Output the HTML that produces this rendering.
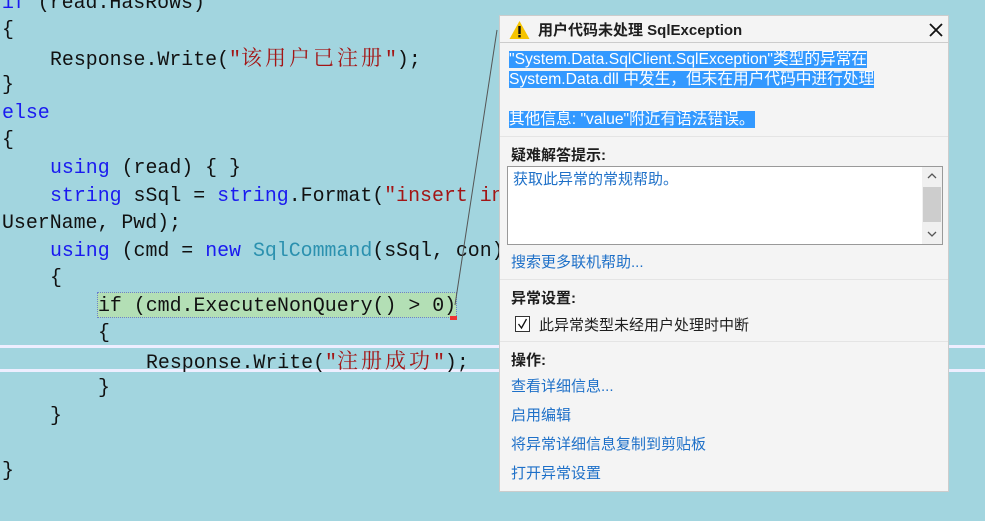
<!DOCTYPE html>
<html><head><meta charset="utf-8"><style>
body{margin:0;width:985px;height:521px;background:#a2d5df;position:relative;overflow:hidden}
.l{position:absolute;left:2px;height:27.5px;white-space:pre;font-family:"Liberation Mono","Noto Serif CJK SC",monospace;font-size:19.9px;line-height:27.5px;color:#111}
.k{color:#1a1af0}.s{color:#a31515}.t{color:#2b91af}
.c{font-family:"Noto Serif CJK SC",serif;font-size:21px;letter-spacing:3px}
.pop{position:absolute;left:499px;top:15px;width:450px;height:477px;background:#f4f4f4;border:1px solid #ccc;box-sizing:border-box;font-family:"Liberation Sans","Noto Sans CJK SC",sans-serif;font-size:15px;color:#1e1e1e}
.a{position:absolute;white-space:nowrap}
.lnk{color:#1e70c8}
.b{font-weight:bold}
.sep{position:absolute;left:0;right:0;height:1px;background:#e4e4e4}
.sel{background:#3399ff;color:#fff}
</style></head><body>
<div class="l" style="top:-11px"><span class="k">if</span> (read.HasRows)</div>
<div class="l" style="top:16px">{</div>
<div class="l" style="top:44px;left:50px">Response.Write(<span class="s">"<span class="c">该用户已注册</span>"</span>);</div>
<div class="l" style="top:71px">}</div>
<div class="l" style="top:99px"><span class="k">else</span></div>
<div class="l" style="top:126px">{</div>
<div class="l" style="top:154px;left:50px"><span class="k">using</span> (read) { }</div>
<div class="l" style="top:182px;left:50px"><span class="k">string</span> sSql = <span class="k">string</span>.Format(<span class="s">"insert in</span></div>
<div class="l" style="top:209px">UserName, Pwd);</div>
<div class="l" style="top:237px;left:50px"><span class="k">using</span> (cmd = <span class="k">new</span> <span class="t">SqlCommand</span>(sSql, con))</div>
<div class="l" style="top:264px;left:50px">{</div>
<div style="position:absolute;left:97px;top:292px;width:360px;height:26px;background:#b3dfb5;border:1px dotted #6a7fd0;box-sizing:border-box"></div>
<div style="position:absolute;left:450px;top:316px;width:7px;height:4px;background:#e33"></div>
<div class="l" style="top:292px;left:98px">if (cmd.ExecuteNonQuery() &gt; 0)</div>
<div class="l" style="top:319px;left:98px">{</div>
<div style="position:absolute;left:0;top:345px;width:985px;height:3px;background:#eef"></div>
<div style="position:absolute;left:0;top:369px;width:985px;height:3px;background:#eef"></div>
<div class="l" style="top:347px;left:146px">Response.Write(<span class="s">"<span class="c">注册成功</span>"</span>);</div>
<div class="l" style="top:374px;left:98px">}</div>
<div class="l" style="top:402px;left:50px">}</div>
<div class="l" style="top:457px">}</div>
<svg style="position:absolute;left:0;top:0" width="985" height="521"><line x1="497" y1="30" x2="455" y2="305" stroke="#555" stroke-width="1"/></svg>
<div class="pop">
 <svg class="a" style="left:9px;top:4px" width="21" height="20"><path d="M10.5 1 L20.5 19 L0.5 19 Z" fill="#f6c400"/><rect x="9.3" y="6" width="2.4" height="8" fill="#111"/><rect x="9.3" y="15" width="2.4" height="2.4" fill="#111"/></svg>
 <div class="a b" style="left:38px;top:3px;font-size:15px">用户代码未处理 SqlException</div>
 <svg class="a" style="left:428px;top:6px" width="16" height="16"><path d="M2 2L14 14M14 2L2 14" stroke="#111" stroke-width="1.8"/></svg>
 <div class="sep" style="top:26px;background:#ccc"></div>
 <div class="a" style="left:9px;top:34px;line-height:20px;font-size:15.7px"><span class="sel">"System.Data.SqlClient.SqlException"类型的异常在 </span><br><span class="sel">System.Data.dll 中发生，但未在用户代码中进行处理</span><br><br><span class="sel">其他信息: "value"附近有语法错误。 </span></div>
 <div class="sep" style="top:120px"></div>
 <div class="a b" style="left:11px;top:128px">疑难解答提示:</div>
 <div class="a" style="left:7px;top:150px;width:436px;height:79px;background:#fff;border:1px solid #999;box-sizing:border-box">
  <div class="a lnk" style="left:5px;top:1px">获取此异常的常规帮助。</div>
  <div class="a" style="right:0;top:0;width:20px;height:77px;background:#f0f0f0"></div>
  <div class="a" style="right:1px;top:20px;width:18px;height:35px;background:#cdcdcd"></div>
  <svg class="a" style="right:5px;top:6px" width="10" height="6"><path d="M1 5L5 1L9 5" stroke="#555" fill="none" stroke-width="1.3"/></svg>
  <svg class="a" style="right:5px;top:64px" width="10" height="6"><path d="M1 1L5 5L9 1" stroke="#555" fill="none" stroke-width="1.3"/></svg>
 </div>
 <div class="a lnk" style="left:11px;top:235px">搜索更多联机帮助...</div>
 <div class="sep" style="top:263px"></div>
 <div class="a b" style="left:11px;top:271px">异常设置:</div>
 <svg class="a" style="left:15px;top:300px" width="15" height="16"><rect x="0.5" y="0.5" width="14" height="15" fill="#fff" stroke="#333"/><path d="M3.5 8L6.5 12L11.5 3" stroke="#111" fill="none" stroke-width="1.3"/></svg>
 <div class="a" style="left:39px;top:298px">此异常类型未经用户处理时中断</div>
 <div class="sep" style="top:325px"></div>
 <div class="a b" style="left:11px;top:333px">操作:</div>
 <div class="a lnk" style="left:11px;top:359px">查看详细信息...</div>
 <div class="a lnk" style="left:11px;top:388px">启用编辑</div>
 <div class="a lnk" style="left:11px;top:417px">将异常详细信息复制到剪贴板</div>
 <div class="a lnk" style="left:11px;top:446px">打开异常设置</div>
</div>
</body></html>
